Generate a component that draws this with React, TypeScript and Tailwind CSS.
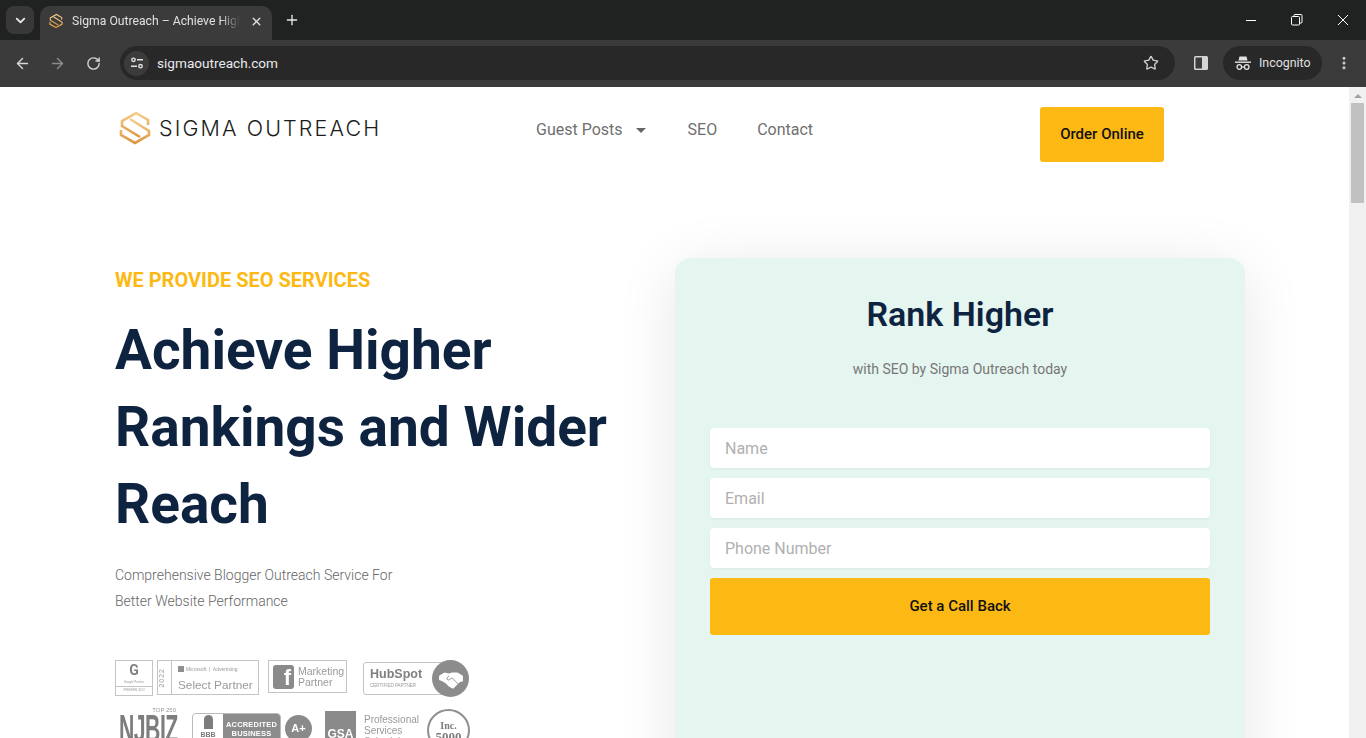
import React from "react";
import { ArrowLeft, ArrowRight, ChevronDown, MoreVertical, Plus, RotateCw, Star, X } from "lucide-react";

function SigmaMark({ className, id }: { className: string; id: string }) {
  return (
    <svg viewBox="0 0 32 36" className={className} fill="none">
      <defs>
        <linearGradient id={id} x1="0" y1="0" x2="0" y2="1">
          <stop offset="0" stopColor="#f6cf90" />
          <stop offset="1" stopColor="#dc9640" />
        </linearGradient>
      </defs>
      <path d="M29 15V10L17 3 3 11v5l18 11" stroke={`url(#${id})`} strokeWidth="2.6" />
      <path d="M2 20v5l14 8 14-8v-4L11 9" stroke={`url(#${id})`} strokeWidth="2.6" />
    </svg>
  );
}

function Chrome() {
  return (
    <div className="flex h-[87px] shrink-0 flex-col bg-[#202124] font-['Liberation_Sans',sans-serif] text-white">
      <div className="flex h-[40px] items-end bg-[#202222]">
        <div className="mb-[6px] ml-[6px] flex h-[28px] w-[28px] items-center justify-center rounded-lg bg-[#383838]">
          <ChevronDown size={15} strokeWidth={3} color="#e8e8e8" />
        </div>
        <div className="ml-[6px] flex h-[34px] w-[232px] items-center rounded-t-[10px] bg-[#3b3b3b] pb-[4px] pl-[9px]">
          <SigmaMark className="h-[16px] w-[14px]" id="fav" />
          <span className="ml-[9px] w-[168px] overflow-hidden whitespace-nowrap font-['Roboto',sans-serif] text-[12.200px] text-[#e0e0e0] [mask-image:linear-gradient(to_right,black_88%,transparent)]">
            Sigma Outreach – Achieve Higher Rankings
          </span>
          <X size={13} strokeWidth={2.5} color="#e0e0e0" className="ml-[10px]" />
        </div>
        <div className="mb-[6px] ml-[12px] flex h-[28px] w-[16px] items-center justify-center">
          <Plus size={16} strokeWidth={2} color="#e8e8e8" />
        </div>
        <div className="mb-[6px] ml-auto flex h-[28px] items-center">
          <span className="mr-[35px] h-px w-[10px] bg-white" />
          <svg viewBox="0 0 12 12" className="mr-[34px] h-[12px] w-[12px]" fill="none" stroke="#fff" strokeWidth="1">
            <rect x="0.5" y="2.5" width="8" height="8.5" rx="1" />
            <path d="M3 2.500V1.500a1 1 0 0 1 1-1h6a1 1 0 0 1 1 1v6.500a1 1 0 0 1-1 1H8.500" />
          </svg>
          <svg viewBox="0 0 12 12" className="mr-[17px] h-[12px] w-[12px]" fill="none" stroke="#fff" strokeWidth="1">
            <path d="M1 1l10 10M11 1L1 11" />
          </svg>
        </div>
      </div>
      <div className="flex h-[47px] items-center bg-[#3b3b3b] pb-[1px]">
        <ArrowLeft size={17} strokeWidth={2} color="#d6d6d6" className="ml-[14px]" />
        <ArrowRight size={17} strokeWidth={2} color="#8b8b8b" className="ml-[18px]" />
        <RotateCw size={15} strokeWidth={2.2} color="#d6d6d6" className="ml-[20px]" />
        <div className="ml-[19px] flex h-[34px] w-[1055px] items-center rounded-full bg-[#282828]">
          <div className="ml-[4px] flex h-[25px] w-[25px] items-center justify-center rounded-full bg-[#3b3b3b]">
            <svg viewBox="0 0 14 14" className="h-[14px] w-[14px]" fill="none" stroke="#e2e2e2" strokeWidth="1.400">
              <circle cx="3.500" cy="3.800" r="1.700" />
              <path d="M7 3.800h6M1 10.200h6" />
              <circle cx="10.500" cy="10.200" r="1.700" />
            </svg>
          </div>
          <span className="ml-[8px] font-['Roboto',sans-serif] text-[13.600px] text-[#e8eaed]">sigmaoutreach.com</span>
          <Star size={16} strokeWidth={2} color="#cfcfcf" className="ml-auto mr-[16px]" />
        </div>
        <svg viewBox="0 0 16 16" className="ml-[18px] h-[16px] w-[16px]">
          <rect x="1" y="1" width="14" height="14" rx="1.500" fill="#d4d4d4" />
          <rect x="2.500" y="2.500" width="6.500" height="11" fill="#3b3b3b" />
        </svg>
        <div className="ml-[14px] flex h-[34px] w-[99px] items-center rounded-full bg-[#282828] pl-[12px]">
          <svg viewBox="0 0 16 16" className="h-[16px] w-[16px]" fill="#e2e2e2">
            <path d="M4.500 1.500h7l1 4H3.500z" />
            <rect x="0" y="6.500" width="16" height="1.400" />
            <circle cx="4.300" cy="12" r="2.300" fill="none" stroke="#e2e2e2" strokeWidth="1.300" />
            <circle cx="11.700" cy="12" r="2.300" fill="none" stroke="#e2e2e2" strokeWidth="1.300" />
            <rect x="6.500" y="11.400" width="3" height="1.200" />
          </svg>
          <span className="ml-[8px] font-['Roboto',sans-serif] text-[12.400px] text-[#e0e0e0]">Incognito</span>
        </div>
        <MoreVertical size={16} strokeWidth={2.5} color="#cfcfcf" className="ml-[14px]" />
      </div>
    </div>
  );
}

function Nav() {
  return (
    <header className="flex h-[92px] items-start">
      <div className="ml-[119px] mt-[23px] flex w-[261px] items-center">
        <SigmaMark className="h-[36px] w-[32px] shrink-0" id="logo" />
        <span className="ml-[8px] whitespace-nowrap font-['Inter',sans-serif] text-[21.500px] font-light leading-[26px] tracking-[0.098em] text-[#1c1c1c]">
          SIGMA OUTREACH
        </span>
      </div>
      <nav className="ml-[156px] mt-[32px] flex items-center font-['Roboto',sans-serif] text-[16px] leading-[21px] text-[#6f6f6f]">
        <span>Guest Posts</span>
        <span className="ml-[13px] mt-[2px] h-0 w-0 border-x-[5px] border-t-[5px] border-x-transparent border-t-[#666]" />
        <span className="ml-[42px]">SEO</span>
        <span className="ml-[40px]">Contact</span>
      </nav>
      <a className="ml-auto mr-[185px] mt-[20px] flex h-[55px] w-[124px] items-center justify-center rounded-[3px] bg-[#fdb913] font-['Roboto',sans-serif] text-[15px] font-medium text-[#111]">
        Order Online
      </a>
    </header>
  );
}

function Badges() {
  return (
    <div className="mt-[46px] blur-[0.4px] font-['Liberation_Sans',sans-serif] text-[#9a9a9a]">
      <div className="flex h-[37px] items-start">
        <div className="flex h-[36px] w-[38px] flex-col items-center border border-[#c4c4c4]">
          <span className="mt-[1px] font-['Roboto',sans-serif] text-[14px] font-bold leading-[17px] text-[#808080]">G</span>
          <span className="text-[3px] leading-[6px]">Google Partner</span>
          <span className="mt-[1px] w-full border-t border-[#c4c4c4] text-center text-[3px] leading-[6px]">PREMIER 2022</span>
        </div>
        <div className="ml-[4px] flex h-[35px] w-[102px] items-center border border-[#c4c4c4]">
          <span className="w-[12px] rotate-180 text-center text-[7px] leading-[7px] tracking-[1px] [writing-mode:vertical-rl]">2022</span>
          <div className="ml-[1px] flex h-full flex-1 flex-col justify-start border-l border-[#c4c4c4] pl-[6px] pt-[4px]">
            <span className="flex items-center whitespace-nowrap text-[5px] leading-[8px]">
              <span className="mr-[2px] h-[6px] w-[6px] bg-[#8f8f8f]" />
              Microsoft &nbsp;|&nbsp; Advertising
            </span>
            <span className="mt-[5px] whitespace-nowrap text-[11.800px] leading-[14px]">Select Partner</span>
          </div>
        </div>
        <div className="ml-[9px] flex h-[33px] w-[79px] items-center border border-[#c4c4c4] pl-[4px]">
          <span className="flex h-[24px] w-[21px] items-end justify-end rounded-[3px] bg-[#8a8a8a] pr-[3px] text-[22px] font-bold leading-[22px] text-white">f</span>
          <span className="ml-[4px] text-[10.500px] leading-[11px]">Marketing<br />Partner</span>
        </div>
        <div className="relative ml-[16px] mt-[2px] flex h-[33px] w-[88px] flex-col justify-center rounded-[3px] border border-[#c4c4c4] pl-[6px]">
          <span className="text-[12.500px] font-bold leading-[13px] text-[#808080]">HubSpot</span>
          <span className="mt-[1px] text-[4.500px] leading-[7px]">CERTIFIED PARTNER</span>
          <span className="absolute -right-[19px] -top-[3px] flex h-[37px] w-[37px] items-center justify-center rounded-full bg-[#8c8c8c]">
            <svg viewBox="0 0 24 24" className="h-[26px] w-[26px]" fill="#fff">
              <path d="M1 9l5-3 4 1 3-1 5 0 5 3v5l-3 1-6 6-2-1-2-1-3-3-3-2-3-1z" />
              <path d="M10 9l-2 3 2 1 3-2 6 6" stroke="#8c8c8c" fill="none" strokeWidth="0.800" />
            </svg>
          </span>
        </div>
      </div>
      <div className="mt-[10px] flex h-[40px] items-start">
        <div className="ml-[4px] flex w-[58px] flex-col items-end">
          <span className="mr-[1px] text-[6px] leading-[7px]">TOP 250</span>
          <span className="mt-[2px] w-[58px] origin-left scale-x-[0.56] whitespace-nowrap text-[38px] font-bold leading-[26px] tracking-[-1px] text-[#7d7d7d]">NJBIZ</span>
        </div>
        <div className="ml-[15px] mt-[6px] flex h-[34px] w-[120px] items-start">
          <div className="flex h-[34px] w-[89px] overflow-hidden rounded-[4px] border border-[#bbb]">
            <span className="flex w-[30px] flex-col items-center text-[7px] font-bold text-[#7d7d7d]">
              <span className="mt-[1px] h-[14px] w-[9px] rounded-t-full bg-[#7d7d7d]" />
              <span className="mt-[2px] text-[7px] leading-[8px]">BBB</span>
            </span>
            <span className="flex flex-1 flex-col items-center bg-[#8c8c8c] pt-[6px] text-[7.500px] font-bold leading-[9px] tracking-[0.2px] text-white">
              ACCREDITED<span>BUSINESS</span>
            </span>
          </div>
          <span className="ml-[4px] mt-[2px] flex h-[27px] w-[27px] items-center justify-center rounded-full bg-[#8a8a8a] text-[11px] font-bold text-white">A+</span>
        </div>
        <div className="ml-[13px] mt-[4px] flex h-[36px] w-[94px]">
          <span className="flex h-[36px] w-[33px] items-end justify-center bg-[#8a8a8a] pb-[6px] text-[12px] font-bold leading-[14px] text-white">GSA</span>
          <span className="ml-[8px] mt-[3px] text-[10px] leading-[11px]">Professional<br />Services<br />Schedule</span>
        </div>
        <div className="ml-[8px] mt-[2px] flex h-[43px] w-[43px] flex-col items-center justify-center rounded-full border-2 border-[#8f8f8f] font-['Liberation_Serif',serif] font-bold leading-[11px] text-[#7d7d7d]">
          <span className="text-[10px]">Inc.</span>
          <span className="text-[13px]">5000</span>
        </div>
      </div>
    </div>
  );
}

function Hero() {
  return (
    <section className="flex items-start font-['Roboto',sans-serif]">
      <div className="ml-[115px] w-[530px]">
        <p className="mt-[10px] text-[20px] font-bold leading-[24px] text-[#fdb913]">WE PROVIDE SEO SERVICES</p>
        <h1 className="mt-[20px] text-[55px] font-bold leading-[77px] text-[#0e2340]">
          Achieve Higher
          <br />
          Rankings and Wider
          <br />
          Reach
        </h1>
        <p className="mt-[19px] text-[14px] font-light leading-[26px] text-[#666]">
          Comprehensive Blogger Outreach Service For
          <br />
          Better Website Performance
        </p>
        <Badges />
      </div>
      <div className="ml-[30px] h-[620px] w-[570px] rounded-[16px] bg-[#e5f5f0] px-[35px] pt-[35px] shadow-[0_10px_60px_rgba(0,0,0,0.10)]">
        <h2 className="text-center text-[34px] font-semibold leading-[42px] text-[#0e2340]">Rank Higher</h2>
        <p className="mt-[24px] text-center text-[14px] leading-[21px] text-[#777]">with SEO by Sigma Outreach today</p>
        <div className="mt-[48px] flex flex-col gap-[10px]">
          {["Name", "Email", "Phone Number"].map((p) => (
            <input
              key={p}
              readOnly
              placeholder={p}
              className="h-[40px] w-full rounded-[4px] bg-white px-[15px] font-['Roboto',sans-serif] text-[16px] shadow-[0_1px_3px_rgba(0,0,0,0.05)] outline-none placeholder:text-[#b0b0b0]"
            />
          ))}
          <button className="h-[57px] w-full rounded-[3px] bg-[#fdb913] font-['Roboto',sans-serif] text-[15px] font-medium text-[#111]">
            Get a Call Back
          </button>
        </div>
      </div>
    </section>
  );
}

function Scrollbar() {
  return (
    <div className="flex w-[17px] shrink-0 flex-col items-center bg-[#f1f1f1]">
      <span className="mt-[7px] h-0 w-0 border-x-[4px] border-b-[4px] border-x-transparent border-b-[#a3a3a3]" />
      <span className="mt-[5px] h-[100px] w-[13px] bg-[#c1c1c1]" />
    </div>
  );
}

export default function App() {
  return (
    <div className="flex h-[738px] w-[1366px] flex-col overflow-hidden bg-white">
      <Chrome />
      <div className="flex min-h-0 flex-1">
        <main className="min-w-0 flex-1 overflow-hidden">
          <Nav />
          <div className="pt-[79px]">
            <Hero />
          </div>
        </main>
        <Scrollbar />
      </div>
    </div>
  );
}
